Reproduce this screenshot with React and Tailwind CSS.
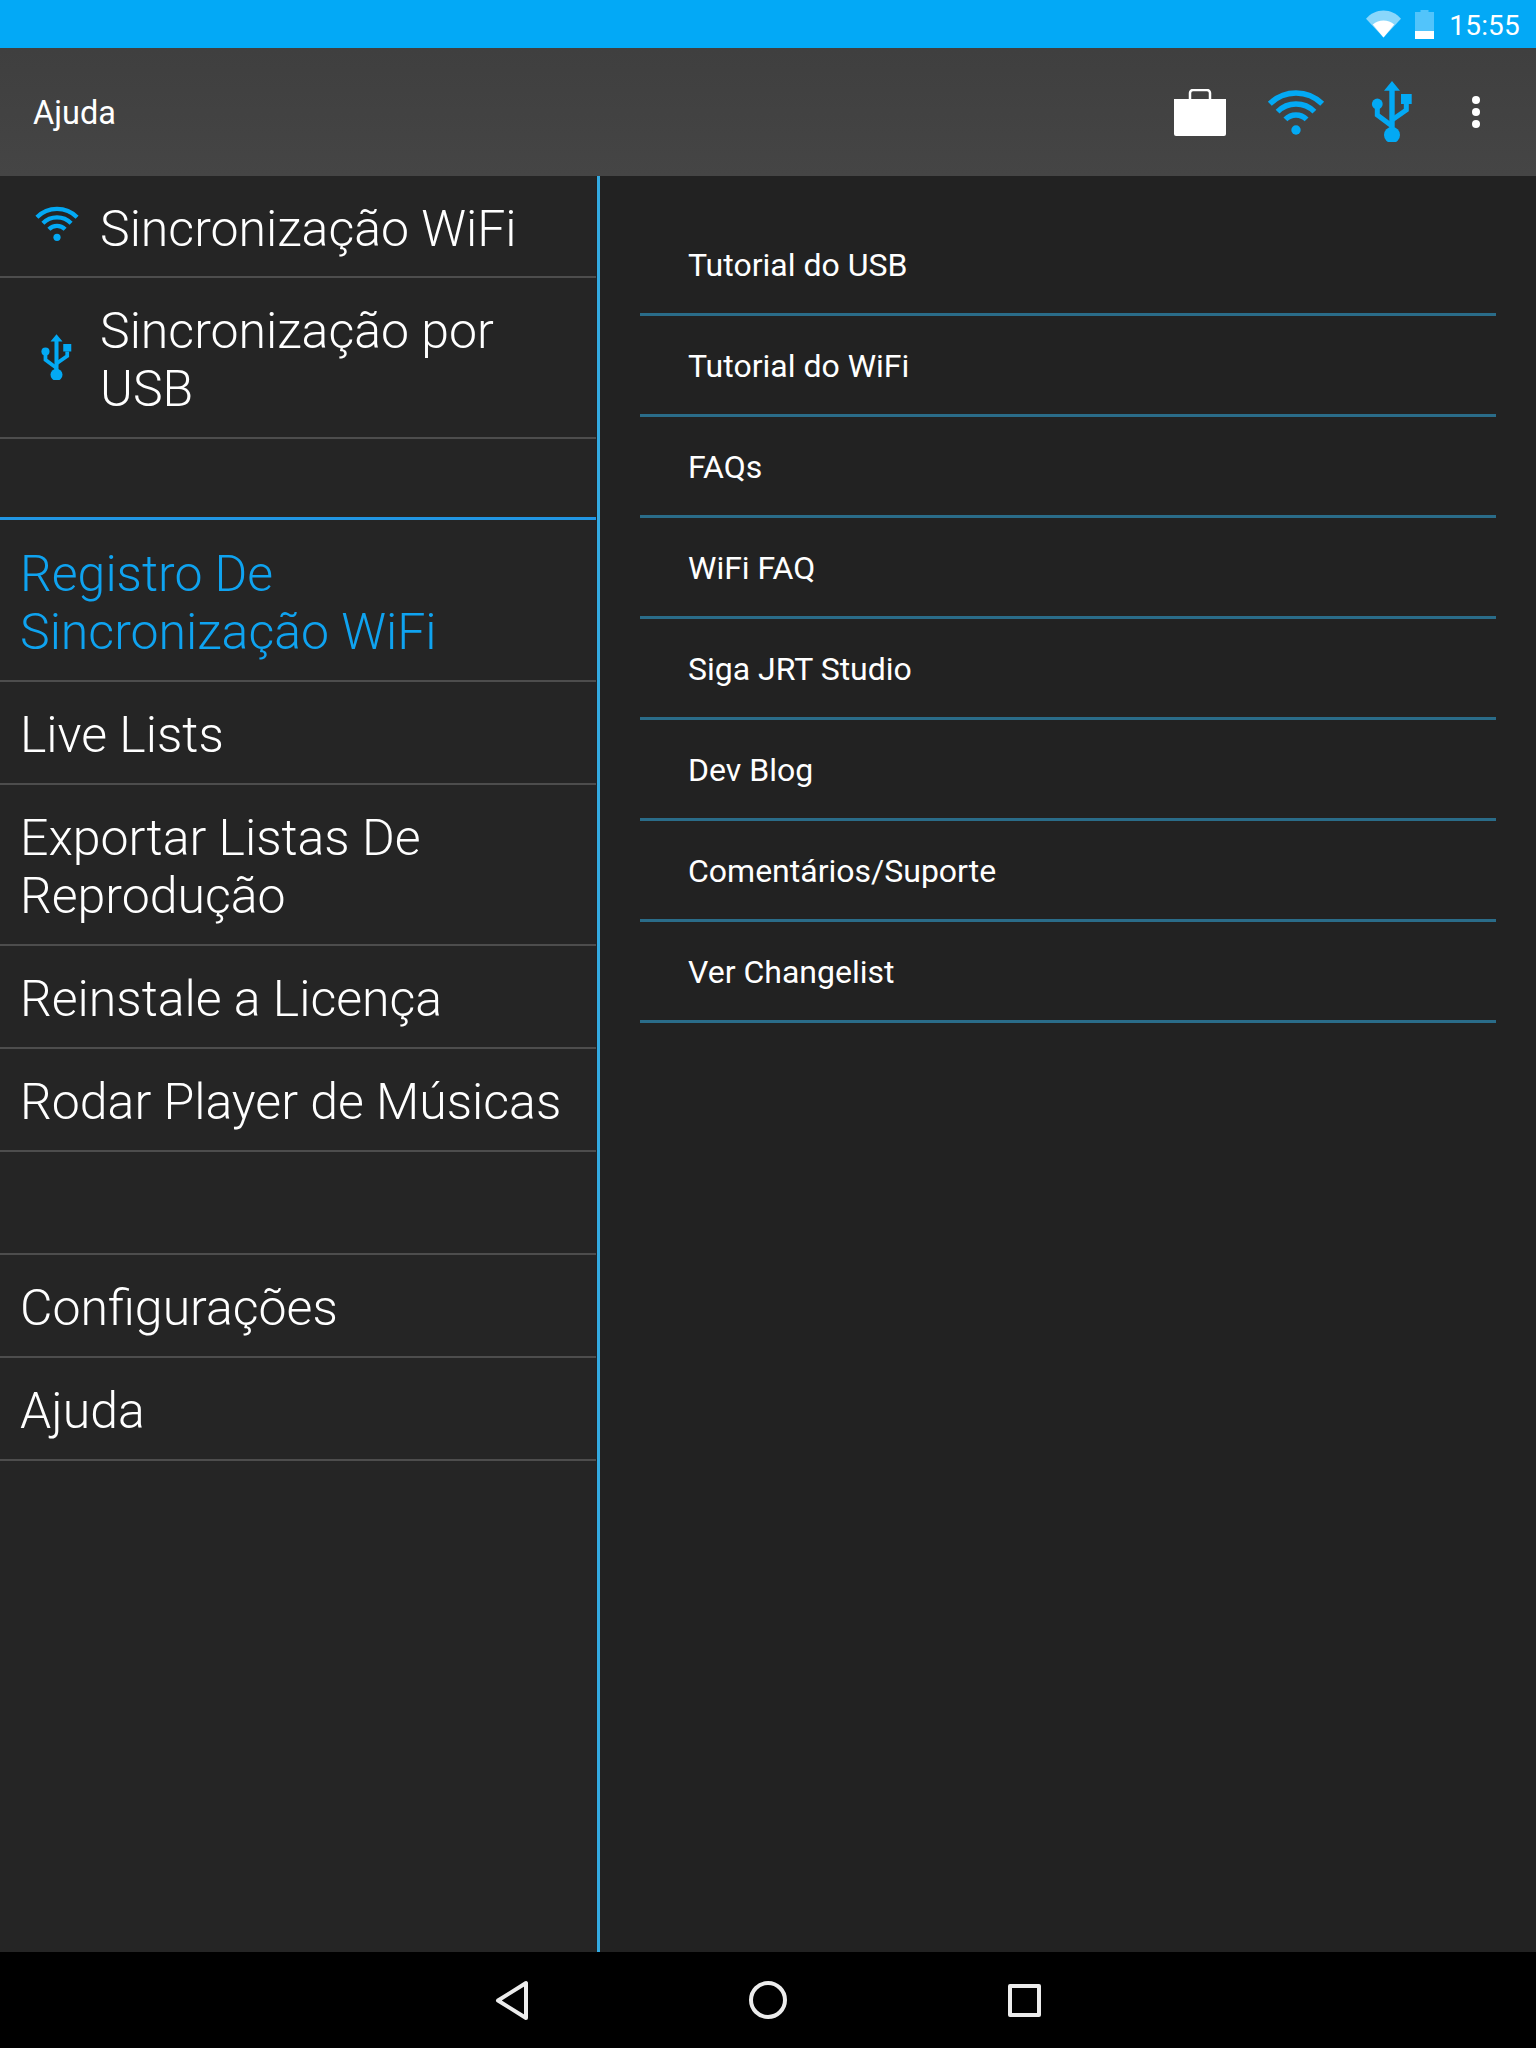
import React from 'react'

const WifiIcon = ({ className = '' }) => (
  <svg viewBox="0 0 60 48" className={className} fill="none" stroke="currentColor" strokeWidth="5.5">
    <path d="M3.8 15.8A37 37 0 0 1 56.2 15.8" />
    <path d="M11.6 23.6A26 26 0 0 1 48.4 23.6" />
    <path d="M19.4 31.4A15 15 0 0 1 40.6 31.4" />
    <circle cx="30" cy="42" r="4.7" fill="currentColor" stroke="none" />
  </svg>
)

const UsbIcon = ({ className = '' }) => (
  <svg viewBox="0 0 48 64" className={className} fill="currentColor">
    <path d="M26 3l8 9.7h-5.3V57h-5.4V12.7H18z" />
    <rect x="35" y="16" width="10.7" height="10" />
    <circle cx="11.3" cy="26" r="5.4" />
    <circle cx="26" cy="57" r="8" />
    <path d="M40.3 26v6L26 42M11.3 26v11L26 48" fill="none" stroke="currentColor" strokeWidth="5" />
  </svg>
)

const sideTop = [
  { label: 'Sincronização WiFi', icon: 'wifi', h: 'h-[102px]' },
  { label: ['Sincronização por', 'USB'], icon: 'usb', h: 'h-[161px]' },
]

const sideMid = [
  { label: ['Registro De', 'Sincronização WiFi'], h: 'h-[162px]', active: true },
  { label: 'Live Lists', h: 'h-[103px]' },
  { label: ['Exportar Listas De', 'Reprodução'], h: 'h-[161px]' },
  { label: 'Reinstale a Licença', h: 'h-[103px]' },
  { label: 'Rodar Player de Músicas', h: 'h-[103px]' },
]

const sideBottom = [
  { label: 'Configurações', h: 'h-[103px]' },
  { label: 'Ajuda', h: 'h-[103px]' },
]

const helpItems = [
  'Tutorial do USB',
  'Tutorial do WiFi',
  'FAQs',
  'WiFi FAQ',
  'Siga JRT Studio',
  'Dev Blog',
  'Comentários/Suporte',
  'Ver Changelist',
]

const SideRow = ({ label, h, active, icon }) => {
  const lines = Array.isArray(label) ? label : [label]
  return (
    <div className={`${h} flex items-center border-b-2 border-[#4d4d4d] pt-[5px] ${icon ? 'pl-[100px]' : 'pl-[20px]'} relative`}>
      {icon === 'wifi' && <WifiIcon className="absolute left-[34px] top-[29px] w-[46px] h-[37px] text-[#03a9f4]" />}
      {icon === 'usb' && <UsbIcon className="absolute left-[37px] top-[54px] w-[36px] h-[48px] text-[#03a9f4]" />}
      <div className={`text-[50px] leading-[58px] font-light ${active ? 'text-[#0fa3f0]' : 'text-white'}`}>
        {lines.map((l) => <div key={l}>{l}</div>)}
      </div>
    </div>
  )
}

export default function App() {
  return (
    <div className="w-[1536px] h-[2048px] flex flex-col bg-black text-white font-['Roboto',sans-serif] overflow-hidden">
      {/* status bar */}
      <div className="h-[48px] bg-[#03a9f6] flex items-center justify-end pr-[16px] shrink-0">
        <svg viewBox="0 0 36 28" className="w-[35px] h-[28px] mr-[14px]">
          <path d="M0 8.5C4.5 3 11 0 18 0s13.5 3 18 8.5L18 28z" fill="#8ad7fb" />
          <path d="M7 14.5C10 12 14 10.500 18 10.500s8 1.500 11 4L18 28z" fill="#fff" />
        </svg>
        <svg viewBox="0 0 19 29" className="w-[19px] h-[29px] mr-[15px]">
          <path d="M5.500 0h8v2H19v27H0V2h5.500z" fill="#52c4fb" />
          <rect x="0" y="21" width="19" height="8" fill="#fff" />
        </svg>
        <span className="text-[28px] leading-none tracking-[0.2px] pt-[3px]">15:55</span>
      </div>

      {/* toolbar */}
      <div className="h-[128px] shrink-0 bg-gradient-to-b from-[#3f3f3f] to-[#454545] flex items-center pl-[33px]">
        <span className="text-[32.5px] pt-[3px]">Ajuda</span>
        <div className="ml-auto flex items-center pr-[56px]">
          <svg viewBox="0 0 52 47" className="w-[52px] h-[47px]">
            <rect x="16" y="1" width="20" height="14" rx="3" fill="none" stroke="#fff" strokeWidth="2.500" />
            <path d="M0 10h52v35a2 2 0 0 1-2 2H2a2 2 0 0 1-2-2z" fill="#fff" />
          </svg>
          <WifiIcon className="w-[60px] h-[48px] ml-[40px] text-[#03a9f4]" />
          <UsbIcon className="w-[48px] h-[64px] ml-[40px] mb-[4px] text-[#03a9f4]" />
          <svg viewBox="0 0 8 32" className="w-[8px] h-[32px] ml-[58px]" fill="#fff">
            <circle cx="4" cy="4" r="4" />
            <circle cx="4" cy="16" r="4" />
            <circle cx="4" cy="28" r="4" />
          </svg>
        </div>
      </div>

      {/* content */}
      <div className="flex-1 flex min-h-0 bg-[#222222]">
        <div className="w-[596px] bg-[#252525] shrink-0">
          {sideTop.map((r) => <SideRow key={r.icon} {...r} />)}
          <div className="h-[78px]" />
          <div className="h-[3px] bg-[#2196e3]" />
          {sideMid.map((r) => <SideRow key={String(r.label)} {...r} />)}
          <div className="h-[103px] border-b-2 border-[#4d4d4d]" />
          {sideBottom.map((r) => <SideRow key={r.label} {...r} />)}
        </div>
        <div className="w-[3px] ml-[1px] bg-[#33aae2] shrink-0" />
        <div className="flex-1 pl-[40px] pr-[40px] pt-[39px]">
          {helpItems.map((t) => (
            <div key={t} className="h-[101px] flex items-center pl-[48px] pt-[2px] border-b-[3px] border-[#2a6c89] text-[32px]">
              {t}
            </div>
          ))}
        </div>
      </div>

      {/* nav bar */}
      <div className="h-[96px] shrink-0 bg-black flex items-center justify-center pr-[2px]">
        <svg viewBox="0 0 36 41" className="w-[36px] h-[41px]" fill="none" stroke="#ececec" strokeWidth="4" strokeLinejoin="round">
          <path d="M32 3v35L4 20.500z" />
        </svg>
        <svg viewBox="0 0 40 40" className="w-[40px] h-[40px] ml-[218px]" fill="none" stroke="#ececec" strokeWidth="4">
          <circle cx="20" cy="20" r="17" />
        </svg>
        <svg viewBox="0 0 33 33" className="w-[33px] h-[33px] ml-[220px]" fill="none" stroke="#ececec" strokeWidth="4" strokeLinejoin="round">
          <rect x="2" y="2" width="29" height="29" />
        </svg>
      </div>
    </div>
  )
}
